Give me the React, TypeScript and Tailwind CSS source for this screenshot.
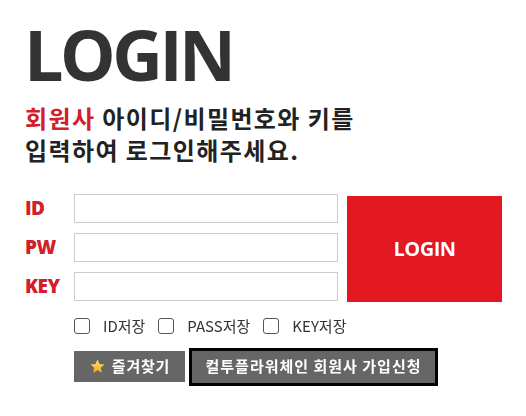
import { useState } from "react";

const KR = "font-['Noto_Sans_CJK_KR','Noto_Sans',sans-serif]";

function Field({ label, type = "text", autoFocus = false }: { label: string; type?: string; autoFocus?: boolean }) {
  return (
    <div className="flex items-center h-[29px]">
      <label className="w-[49px] text-[19px] font-extrabold text-[#d0202a] font-['Open_Sans',sans-serif] tracking-[-0.5px]">
        {label}
      </label>
      <input
        type={type}
        autoFocus={autoFocus}
        className="w-[264px] h-[29px] border border-[#cccccc] bg-white px-2 text-sm outline-none caret-black"
      />
    </div>
  );
}

function Check({ label }: { label: string }) {
  const [on, setOn] = useState(false);
  return (
    <label className="flex items-center cursor-pointer">
      <input
        type="checkbox"
        checked={on}
        onChange={() => setOn(!on)}
        className="appearance-none w-[16px] h-[16px] rounded-[3px] border border-[#555] bg-white"
      />
      <span className="ml-[13px] text-[15px] text-[#333]">{label}</span>
    </label>
  );
}

export default function App() {
  return (
    <div className={`w-[526px] h-[416px] bg-white pl-[25px] pt-[7px] ${KR}`}>
      <h1 className="text-[70px] leading-[95px] font-bold text-[#333] font-['Open_Sans',sans-serif] tracking-[-3.5px] ml-[-1px]">
        LOGIN
      </h1>
      <p className="text-[24px] leading-[32px] font-bold tracking-[1.4px] text-[#222]">
        <span className="text-[#d0202a]">회원사</span> 아이디/비밀번호와 키를
        <br />
        입력하여 로그인해주세요.
      </p>

      <div className="flex mt-[28px]">
        <div className="flex flex-col gap-[10px]">
          <Field label="ID" autoFocus />
          <Field label="PW" type="password" />
          <Field label="KEY" />
        </div>
        <button className="ml-[9px] mt-[2px] w-[155px] h-[106px] bg-[#e31820] text-white text-[20px] font-bold font-['Open_Sans',sans-serif] tracking-[-0.5px]">
          LOGIN
        </button>
      </div>

      <div className="flex items-center gap-[13px] ml-[49px] mt-[13px]">
        <Check label="ID저장" />
        <Check label="PASS저장" />
        <Check label="KEY저장" />
      </div>

      <div className="flex items-center ml-[49px] mt-[10px]">
        <button className="flex items-center justify-center w-[111px] h-[31px] bg-[#666] text-white text-[15px] font-bold tracking-[0.8px]">
          <svg viewBox="0 0 24 24" className="w-[17px] h-[17px] mr-[6px]">
            <defs>
              <linearGradient id="st" x1="0" y1="0" x2="0" y2="1">
                <stop offset="0" stopColor="#ffe27a" />
                <stop offset="1" stopColor="#f2a814" />
              </linearGradient>
            </defs>
            <path d="M12 2l2.9 6.6 7.1.6-5.4 4.7 1.6 7-6.2-3.7-6.2 3.7 1.6-7L2 9.2l7.1-.6z" fill="url(#st)" />
          </svg>
          즐겨찾기
        </button>
        <button className="ml-[4px] w-[249px] h-[38px] bg-[#666] border-[3px] border-black text-white text-[15px] font-bold tracking-[1px]">
          컬투플라워체인 회원사 가입신청
        </button>
      </div>
    </div>
  );
}
